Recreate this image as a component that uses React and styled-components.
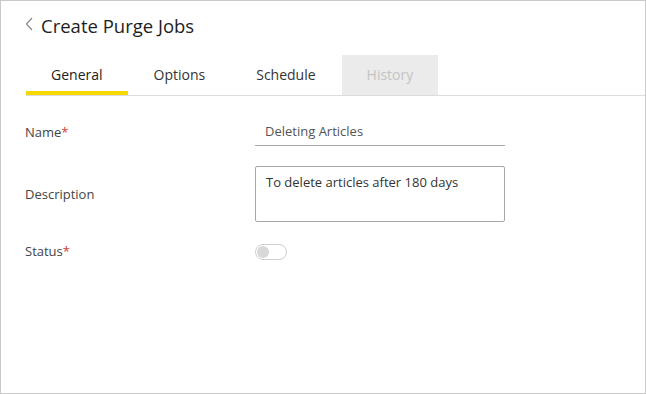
import React from "react";
import styled, { createGlobalStyle } from "styled-components";

const GlobalStyle = createGlobalStyle`
  body {
    margin: 0;
    font-family: "Open Sans", "Noto Sans", sans-serif;
    background: #fff;
  }
`;

const tabs = ["General", "Options", "Schedule", "History"];

export default function App() {
  return (
    <Frame>
      <GlobalStyle />
      <Header>
        <Back>
          <svg width="9" height="14" viewBox="0 0 9 14">
            <path d="M7 1 L1.5 7 L7 13" fill="none" stroke="#888" strokeWidth="1.2" />
          </svg>
        </Back>
        <Title>Create Purge Jobs</Title>
      </Header>
      <TabBar>
        {tabs.map((t, i) => (
          <Tab key={t} active={i === 0} disabled={t === "History"}>
            {t}
          </Tab>
        ))}
      </TabBar>
      <Form>
        <Label>
          Name<Req>*</Req>
        </Label>
        <Input defaultValue="Deleting Articles" />
        <Label>Description</Label>
        <TextArea defaultValue="To delete articles after 180 days" />
        <Label>
          Status<Req>*</Req>
        </Label>
        <Toggle>
          <Knob />
        </Toggle>
      </Form>
    </Frame>
  );
}

const Frame = styled.div`
  width: 646px;
  height: 394px;
  box-sizing: border-box;
  border: 1px solid #c9c9c9;
  background: #fff;
`;

const Header = styled.div`
  display: flex;
  align-items: center;
  padding: 11px 0 0 24px;
  height: 27px;
`;

const Back = styled.span`
  display: flex;
  width: 16px;
  margin-top: -4px;
`;

const Title = styled.h1`
  margin: 0;
  font-size: 18.5px;
  font-weight: 500;
  color: #1e1e1e;
`;

const Tab = styled.div`
  height: 40px;
  box-sizing: border-box;
  padding: 2px 25px 0;
  display: flex;
  align-items: center;
  font-size: 14px;
  color: ${(p) => (p.disabled ? "#c4c4c4" : p.active ? "#222" : "#333")};
  background: ${(p) => (p.disabled ? "#ebebeb" : "transparent")};
  border-bottom: 4px solid ${(p) => (p.active ? "#f7d900" : "transparent")};

  & + & {
    margin-left: 1px;
  }
`;

const TabBar = styled.div`
  display: flex;
  margin: 16px 0 0 25px;
  border-bottom: 1px solid #dcdcdc;
`;

const Form = styled.div`
  display: grid;
  grid-template-columns: 230px 250px;
  row-gap: 20px;
  margin: 21px 0 0 24px;
  align-items: center;
`;

const Label = styled.div`
  font-size: 13px;
  color: #444;
`;

const Req = styled.span`
  color: #d93636;
`;

const Input = styled.input`
  height: 29px;
  box-sizing: border-box;
  border: none;
  border-bottom: 1px solid #a8a8a8;
  padding: 0 10px;
  font-family: inherit;
  font-size: 13px;
  color: #555;
  outline: none;
`;

const TextArea = styled.textarea`
  height: 56px;
  box-sizing: border-box;
  border: 1px solid #a8a8a8;
  border-radius: 2px;
  padding: 6px 10px;
  font-family: inherit;
  font-size: 13px;
  color: #333;
  resize: none;
  outline: none;
`;

const Toggle = styled.div`
  width: 32px;
  height: 16px;
  box-sizing: border-box;
  border: 1px solid #cfcfcf;
  border-radius: 8px;
  display: flex;
  align-items: center;
  padding-left: 1px;
  margin-top: 2px;
`;

const Knob = styled.div`
  width: 12px;
  height: 12px;
  border-radius: 50%;
  background: #d8d8d8;
`;
